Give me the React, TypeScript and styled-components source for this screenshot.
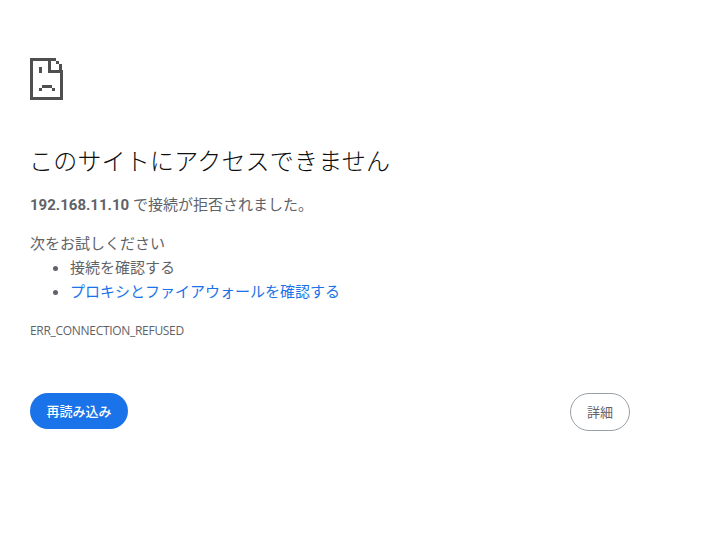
import React from "react";
import styled, { createGlobalStyle } from "styled-components";

const Global = createGlobalStyle`
  html, body { margin: 0; padding: 0; background: #fff; }
  body {
    font-family: "Open Sans", "Noto Sans CJK JP", "Liberation Sans", sans-serif;
    font-size: 15px;
    color: #5f6368;
  }
`;

const Page = styled.main`
  box-sizing: border-box;
  width: 717px;
  height: 547px;
  padding: 58px 87px 0 30px;
  display: flex;
  flex-direction: column;
  overflow: hidden;
`;

const Title = styled.h1`
  margin: 46px 0 0 -1px;
  font-size: 24px;
  font-weight: 300;
  line-height: 30px;
  letter-spacing: 0.2px;
  color: #0c0d0e;
`;

const Message = styled.p`
  margin: 16px 0 0;
  font-size: 15px;
  line-height: 24px;
`;

const Address = styled.strong`
  font-family: Roboto, sans-serif;
  font-weight: 700;
`;

const Hint = styled.p`
  margin: 14px 0 0;
  font-size: 15px;
  line-height: 24px;
`;

const Suggestions = styled.ul`
  margin: 0;
  padding: 0 0 0 40px;
  font-size: 15px;
  line-height: 24px;
`;

const Link = styled.a`
  color: #1a73e8;
  text-decoration: none;
`;

const Code = styled.div`
  margin-top: 20px;
  font-size: 12px;
  line-height: 16px;
  letter-spacing: -0.3px;
`;

const Actions = styled.div`
  margin-top: 54px;
  display: flex;
  justify-content: space-between;
  align-items: flex-start;
`;

const Reload = styled.button`
  height: 36px;
  width: 98px;
  padding: 0 0 2px;
  border: 0;
  border-radius: 18px;
  background: #1a73e8;
  color: #fff;
  font: 500 13px "Noto Sans CJK JP", sans-serif;
`;

const Details = styled.button`
  box-sizing: border-box;
  height: 38px;
  width: 60px;
  padding: 0 0 2px;
  border: 1px solid #9aa0a6;
  border-radius: 19px;
  background: #fff;
  color: #5f6368;
  font: 400 13px "Noto Sans CJK JP", sans-serif;
`;

const IconArt = styled.svg`
  display: block;
  flex: none;
  fill: #4f4f4f;
`;

const Icon = () => (
  <IconArt width="33" height="42" viewBox="0 0 33 42" shapeRendering="crispEdges" aria-hidden="true">
    <rect x="0" y="0" width="3" height="42" />
    <rect x="0" y="0" width="26" height="3" />
    <rect x="0" y="39" width="33" height="3" />
    <rect x="30" y="12" width="3" height="30" />
    <rect x="18" y="0" width="3" height="15" />
    <rect x="18" y="12" width="15" height="3" />
    <rect x="26" y="3" width="3" height="3" />
    <rect x="29" y="6" width="3" height="6" />
    <rect x="9" y="9" width="3" height="6" />
    <rect x="12" y="27" width="10" height="3" />
    <rect x="9" y="30" width="3" height="3" />
    <rect x="22" y="30" width="3" height="3" />
  </IconArt>
);

export default function App() {
  return (
    <>
      <Global />
      <Page>
        <Icon />
        <Title>このサイトにアクセスできません</Title>
        <Message><Address>192.168.11.10</Address> で接続が拒否されました。</Message>
        <Hint>次をお試しください</Hint>
        <Suggestions>
          <li>接続を確認する</li>
          <li><Link href="#">プロキシとファイアウォールを確認する</Link></li>
        </Suggestions>
        <Code>ERR_CONNECTION_REFUSED</Code>
        <Actions>
          <Reload>再読み込み</Reload>
          <Details>詳細</Details>
        </Actions>
      </Page>
    </>
  );
}
